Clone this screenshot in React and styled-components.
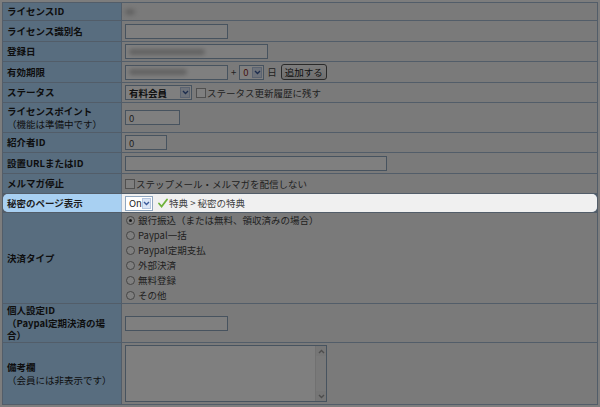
import React from 'react';
import styled, { createGlobalStyle, css } from 'styled-components';

const GlobalStyle = createGlobalStyle`
  html, body {
    margin: 0;
    padding: 0;
    background: #fafafa;
    overflow: hidden;
  }
  body {
    font-family: "Noto Sans CJK JP", "Liberation Sans", sans-serif;
    font-size: 9.5px;
    color: #333;
  }
`;

const Page = styled.div`
  width: 600px;
  height: 407px;
  overflow: hidden;
  padding: 2px 0 0 2px;
  box-sizing: border-box;
`;

const Form = styled.div`
  width: 596px;
  box-sizing: border-box;
  border: 1px solid #a4bad2;
  background: #a4bad2;
  display: flex;
  flex-direction: column;
  gap: 1px;
`;

const Row = styled.div`
  display: grid;
  grid-template-columns: 118px 1fr;
  column-gap: 1px;
  height: ${p => p.h}px;

  ${p => p.spot && css`
    position: relative;
    z-index: 1;
    border-radius: 5px;
    overflow: hidden;
    box-shadow: 0 0 0 1500px rgba(0, 0, 0, 0.5);
  `}
`;

const Label = styled.div`
  background: ${p => (p.spot ? '#a8d0f2' : '#b0dbff')};
  color: #1c1c1c;
  font-weight: bold;
  line-height: 12.5px;
  padding: 0 4px;
  display: flex;
  flex-direction: column;
  justify-content: center;
`;

const Note = styled.span`
  font-weight: ${p => (p.bold ? 'bold' : 'normal')};
`;

const Value = styled.div`
  background: ${p => (p.spot ? '#f0f0f0' : '#f4f4f4')};
  color: #444;
  padding: 0 3px;
  display: flex;
  align-items: center;
  gap: ${p => p.gap ?? 4}px;
`;

const TextBox = styled.div`
  width: ${p => p.w}px;
  height: 15px;
  box-sizing: border-box;
  border: 1px solid #8fa6bf;
  background: #fff;
  display: flex;
  align-items: center;
  padding-left: 3px;
`;

const Blur = styled.span`
  display: inline-block;
  width: ${p => p.w}px;
  height: 6px;
  border-radius: 3px;
  background: #c4c4c4;
  filter: blur(2px);
`;

const Select = styled.div`
  width: ${p => p.w}px;
  height: 15px;
  box-sizing: border-box;
  border: 1px solid #8fa6bf;
  background: #fff;
  color: ${p => p.color || '#222'};
  font-weight: ${p => (p.bold ? 'bold' : 'normal')};
  display: flex;
  align-items: center;
  justify-content: space-between;
  padding-left: 3px;
`;

const Arrow = styled.span`
  width: 10px;
  height: 11px;
  margin-right: 1px;
  box-sizing: border-box;
  background: #dbe5f5;
  border: 1px solid #b6c7e0;
  display: flex;
  align-items: center;
  justify-content: center;
`;

const Button = styled.div`
  width: 46px;
  height: 16px;
  box-sizing: border-box;
  border: 1px solid #555;
  border-radius: 3px;
  background: linear-gradient(#fafafa, #dedede);
  color: #222;
  display: flex;
  align-items: center;
  justify-content: center;
  margin-left: 1px;
`;

const Check = styled.span`
  width: 10px;
  height: 10px;
  box-sizing: border-box;
  border: 1px solid #a0a0a0;
  background: #fff;
  flex: none;
`;

const CheckLabel = styled.div`
  display: flex;
  align-items: center;
  gap: 1px;
`;

const Radios = styled.div`
  display: flex;
  flex-direction: column;
  justify-content: center;
  align-self: stretch;
  padding-left: 1px;
  line-height: 15px;
`;

const RadioItem = styled.div`
  display: flex;
  align-items: center;
  gap: 3px;
`;

const Radio = styled.span`
  width: 9px;
  height: 9px;
  box-sizing: border-box;
  border-radius: 50%;
  border: 1px solid #8c8c8c;
  background: #fff;
  display: flex;
  align-items: center;
  justify-content: center;

  &::after {
    content: '';
    width: 3px;
    height: 3px;
    border-radius: 50%;
    background: ${p => (p.checked ? '#333' : 'transparent')};
  }
`;

const Memo = styled.div`
  width: 202px;
  height: 57px;
  box-sizing: border-box;
  border: 1px solid #8fa6bf;
  background: #fff;
  display: flex;
  justify-content: flex-end;
`;

const ScrollBar = styled.div`
  width: 10px;
  background: #f3f3f3;
  border-left: 1px solid #e2e2e2;
  display: flex;
  flex-direction: column;
  justify-content: space-between;
`;

const ScrollBtn = styled.span`
  height: 10px;
  display: flex;
  align-items: center;
  justify-content: center;
  background: #ececec;
`;

const Chevron = ({ up, color = '#3a5a9a' }) => (
  <svg width="7" height="5" viewBox="0 0 7 5">
    <path
      d={up ? 'M1 4 L3.5 1.5 L6 4' : 'M1 1 L3.5 3.5 L6 1'}
      fill="none"
      stroke={color}
      strokeWidth="1.4"
    />
  </svg>
);

const Tick = () => (
  <svg width="10" height="10" viewBox="0 0 10 10">
    <path d="M1 5.5 L3.6 8.5 L9 1.5" fill="none" stroke="#6fb33a" strokeWidth="1.8" strokeLinecap="round" />
  </svg>
);

const payTypes = [
  '銀行振込（または無料、領収済みの場合）',
  'Paypal一括',
  'Paypal定期支払',
  '外部決済',
  '無料登録',
  'その他',
];

export default function App() {
  return (
    <>
      <GlobalStyle />
      <Page>
        <Form>
          <Row h={17}>
            <Label>ライセンスID</Label>
            <Value><Blur w={10} /></Value>
          </Row>
          <Row h={20}>
            <Label>ライセンス識別名</Label>
            <Value><TextBox w={103} /></Value>
          </Row>
          <Row h={19}>
            <Label>登録日</Label>
            <Value><TextBox w={143}><Blur w={76} /></TextBox></Value>
          </Row>
          <Row h={20}>
            <Label>有効期限</Label>
            <Value gap={3}>
              <TextBox w={103}><Blur w={58} /></TextBox>
              <span>+</span>
              <Select w={25} color="#8a1c1c">0<Arrow><Chevron /></Arrow></Select>
              <span>日</span>
              <Button>追加する</Button>
            </Value>
          </Row>
          <Row h={19}>
            <Label>ステータス</Label>
            <Value>
              <Select w={67} bold>有料会員<Arrow><Chevron /></Arrow></Select>
              <CheckLabel><Check />ステータス更新履歴に残す</CheckLabel>
            </Value>
          </Row>
          <Row h={29}>
            <Label>
              <span>ライセンスポイント</span>
              <Note>（機能は準備中です）</Note>
            </Label>
            <Value><TextBox w={55}>0</TextBox></Value>
          </Row>
          <Row h={19}>
            <Label>紹介者ID</Label>
            <Value><TextBox w={42}>0</TextBox></Value>
          </Row>
          <Row h={20}>
            <Label>設置URLまたはID</Label>
            <Value><TextBox w={262} /></Value>
          </Row>
          <Row h={19}>
            <Label>メルマガ停止</Label>
            <Value>
              <CheckLabel><Check />ステップメール・メルマガを配信しない</CheckLabel>
            </Value>
          </Row>
          <Row h={18} spot>
            <Label spot>秘密のページ表示</Label>
            <Value spot gap={5}>
              <Select w={28}>On<Arrow><Chevron /></Arrow></Select>
              <CheckLabel><Tick />特典 &gt; 秘密の特典</CheckLabel>
            </Value>
          </Row>
          <Row h={90}>
            <Label>決済タイプ</Label>
            <Value>
              <Radios>
                {payTypes.map((t, i) => (
                  <RadioItem key={t}>
                    <Radio checked={i === 0} />
                    {t}
                  </RadioItem>
                ))}
              </Radios>
            </Value>
          </Row>
          <Row h={38}>
            <Label>
              <span>個人設定ID</span>
              <Note bold>（Paypal定期決済の場</Note>
              <Note bold>合）</Note>
            </Label>
            <Value><TextBox w={103} /></Value>
          </Row>
          <Row h={61}>
            <Label>
              <span>備考欄</span>
              <Note>（会員には非表示です）</Note>
            </Label>
            <Value>
              <Memo>
                <ScrollBar>
                  <ScrollBtn><Chevron up color="#9a9a9a" /></ScrollBtn>
                  <ScrollBtn><Chevron color="#9a9a9a" /></ScrollBtn>
                </ScrollBar>
              </Memo>
            </Value>
          </Row>
        </Form>
      </Page>
    </>
  );
}
